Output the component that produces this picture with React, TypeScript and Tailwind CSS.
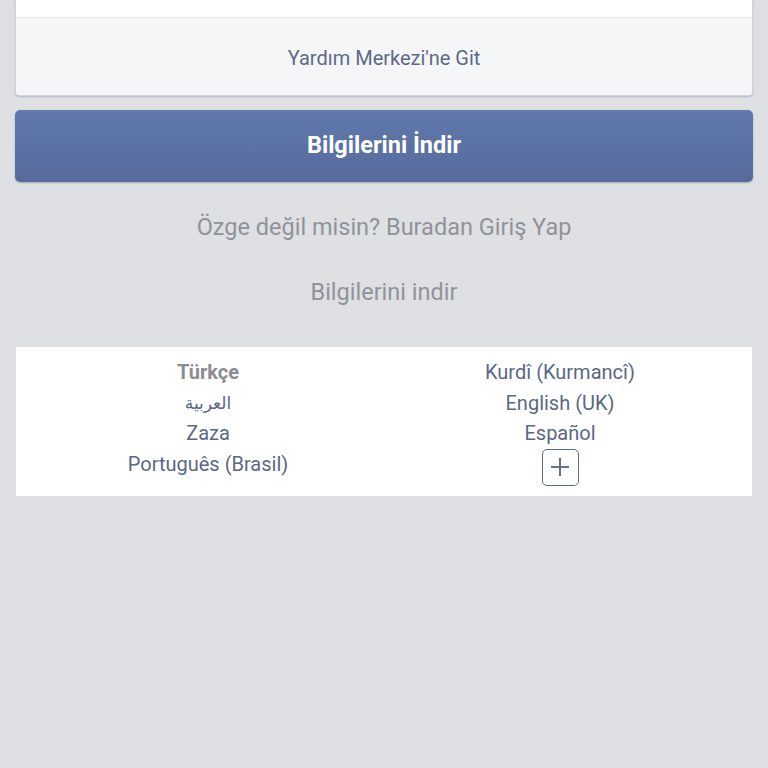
import React from "react";

export default function App() {
  const left = ["العربية", "Zaza", "Português (Brasil)"];
  const right = ["Kurdî (Kurmancî)", "English (UK)", "Español"];
  return (
    <div
      className="min-h-screen bg-[#dfe0e4] px-[15px]"
      style={{ fontFamily: "Roboto, 'Noto Sans', 'DejaVu Sans', sans-serif" }}
    >
      <div className="rounded-b-[5px] border-x border-b border-[#d3d5da] bg-white shadow-[0_1px_2px_rgba(0,0,0,0.18)] overflow-hidden">
        <div className="h-[17px] bg-white" />
        <div className="flex h-[78px] items-center justify-center border-t border-[#e6e7ea] bg-[#f5f6f7] pt-[2px] text-[20px] text-[#5d6a86]">
          Yardım Merkezi'ne Git
        </div>
      </div>
      <div className="mt-[14px] flex h-[72px] items-center justify-center rounded-[5px] bg-gradient-to-b from-[#6079ad] to-[#576b9c] text-[23.5px] font-bold text-white shadow-[0_1px_2px_rgba(0,0,0,0.25)]">
        Bilgilerini İndir
      </div>
      <div className="flex h-[91px] items-center justify-center text-[23.5px] text-[#909399]">
        Özge değil misin? Buradan Giriş Yap
      </div>
      <div className="flex h-[38px] items-center justify-center pt-[1px] text-[23.5px] text-[#909399]">
        Bilgilerini indir
      </div>
      <div className="mx-px mt-[36px] grid grid-cols-2 bg-white px-4 pt-[10px] pb-[10px] text-[20px] leading-[30.5px] text-[#5a6787]">
        <div className="flex flex-col items-center">
          <div className="font-bold text-[#8b8d92]">Türkçe</div>
          {left.map((l) => (
            <div key={l} style={l === "العربية" ? { fontFamily: "'Noto Sans', 'DejaVu Sans', sans-serif", fontSize: 17 } : undefined}>
              {l}
            </div>
          ))}
        </div>
        <div className="flex flex-col items-center">
          {right.map((l) => (
            <div key={l}>{l}</div>
          ))}
          <div className="mt-0 flex h-[37px] w-[37px] items-center justify-center rounded-[5px] border-[1.5px] border-[#5f6b85]">
            <svg width="22" height="22" viewBox="0 0 22 22">
              <path d="M11 2v18M2 11h18" stroke="#6b7080" strokeWidth="2" />
            </svg>
          </div>
        </div>
      </div>
    </div>
  );
}
